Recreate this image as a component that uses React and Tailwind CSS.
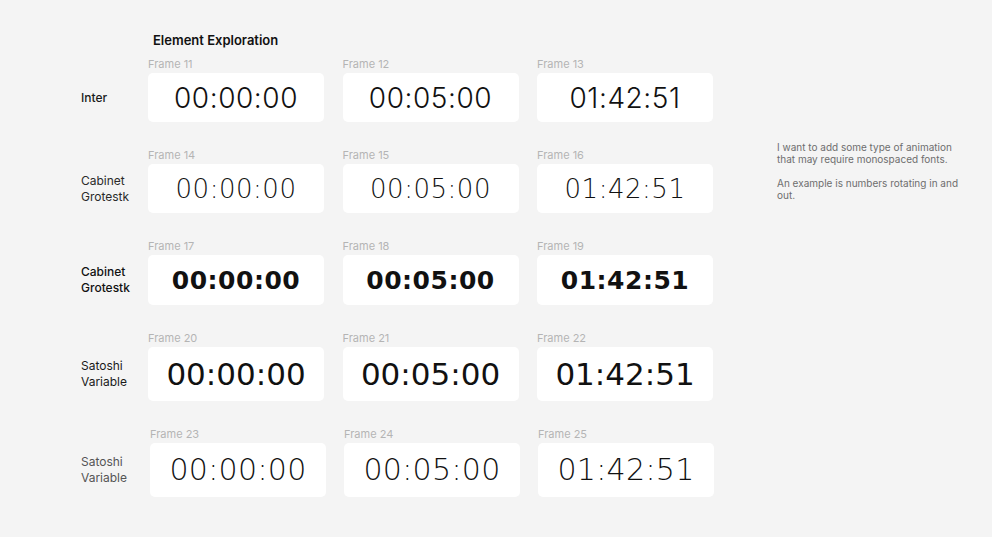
import React from 'react';

const rows = [
  {
    label: ['Inter'],
    labelClass: 'font-medium text-[#1a1a1a]',
    frames: [11, 12, 13],
    height: 'h-[49px]',
    timeClass: "font-['Inter',sans-serif] font-light text-[28px] tracking-[0.02em]",
    shift: '',
    gap: 'gap-[18.5px]',
  },
  {
    label: ['Cabinet', 'Grotestk'],
    labelClass: 'font-normal text-[#2a2a2a]',
    frames: [14, 15, 16],
    height: 'h-[49px]',
    timeClass: "font-['DejaVu_Sans',sans-serif] font-extralight text-[26px] tracking-[0.02em]",
    shift: '',
    gap: 'gap-[18.5px]',
  },
  {
    label: ['Cabinet', 'Grotestk'],
    labelClass: 'font-medium text-[#111]',
    frames: [17, 18, 19],
    height: 'h-[50px]',
    timeClass: "font-['DejaVu_Sans',sans-serif] font-bold text-[25px] tracking-[0.02em]",
    shift: '',
    gap: 'gap-[18.5px]',
  },
  {
    label: ['Satoshi', 'Variable'],
    labelClass: 'font-normal text-[#1a1a1a]',
    frames: [20, 21, 22],
    height: 'h-[54px]',
    timeClass: "font-['DejaVu_Sans',sans-serif] font-normal text-[31px]",
    shift: '',
    gap: 'gap-[18.5px]',
  },
  {
    label: ['Satoshi', 'Variable'],
    labelClass: 'font-normal text-[#555]',
    frames: [23, 24, 25],
    height: 'h-[54px]',
    timeClass: "font-['DejaVu_Sans',sans-serif] font-extralight text-[30px] tracking-[0.01em]",
    shift: 'ml-[2px]',
    gap: 'gap-[18px]',
  },
];

const times = ['00:00:00', '00:05:00', '01:42:51'];

const Row = ({ row }) => (
  <div className="flex items-end">
    <div className={`w-[67px] flex items-center text-[12px] leading-[16px] ${row.height} ${row.labelClass}`}>
      <div>
        {row.label.map((l) => (
          <div key={l}>{l}</div>
        ))}
      </div>
    </div>
    <div className={`flex ${row.gap} ${row.shift}`}>
      {row.frames.map((f, i) => (
        <div key={f} className="w-[176px]">
          <div className="text-[11px] leading-[13px] text-[#b4b4b4] mb-[2px] mt-[1px]">Frame {f}</div>
          <div className={`bg-white rounded-[5px] flex items-center justify-center text-[#111] ${row.height}`}>
            <span className={`leading-none ${row.timeClass}`}>{times[i]}</span>
          </div>
        </div>
      ))}
    </div>
  </div>
);

export default function App() {
  return (
    <div className="w-[992px] h-[537px] bg-[#f4f4f4] flex items-start font-['Inter',sans-serif] overflow-hidden">
      <div className="pt-[32px] pl-[81px]">
        <div className="ml-[72px] text-[13px] leading-[16px] font-semibold text-[#111] mb-[9px]">
          Element Exploration
        </div>
        <div className="flex flex-col gap-[26px]">
          {rows.map((r, i) => (
            <Row key={i} row={r} />
          ))}
        </div>
      </div>
      <div className="ml-[63px] mt-[141px] text-[10px] leading-[12px] text-[#6e6e6e]">
        I want to add some type of animation
        <br />
        that may require monospaced fonts.
        <br />
        <br />
        An example is numbers rotating in and
        <br />
        out.
      </div>
    </div>
  );
}
